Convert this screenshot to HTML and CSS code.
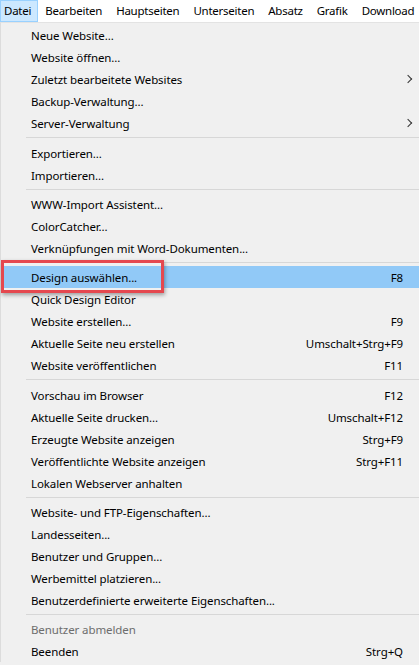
FILE: index.html
```html
<!DOCTYPE html>
<html lang="de">

<head>
    <meta charset="UTF-8">
    <meta name="viewport" content="width=device-width, initial-scale=1.0">
    <title>Datei-Menü</title>
    <link rel="stylesheet" href="styles.css">
</head>

<body>

    <nav class="menubar">
        <span class="bar-item active">Datei</span>
        <span class="bar-item">Bearbeiten</span>
        <span class="bar-item">Hauptseiten</span>
        <span class="bar-item">Unterseiten</span>
        <span class="bar-item">Absatz</span>
        <span class="bar-item">Grafik</span>
        <span class="bar-item">Download</span>
    </nav>

    <div class="menu">
        <div class="item">Neue Website...</div>
        <div class="item">Website öffnen...</div>
        <div class="item">Zuletzt bearbeitete Websites <span class="arrow"></span></div>
        <div class="item">Backup-Verwaltung...</div>
        <div class="item">Server-Verwaltung <span class="arrow"></span></div>
        <div class="sep wide"></div>
        <div class="item">Exportieren...</div>
        <div class="item">Importieren...</div>
        <div class="sep"></div>
        <div class="item">WWW-Import Assistent...</div>
        <div class="item">ColorCatcher...</div>
        <div class="item">Verknüpfungen mit Word-Dokumenten...</div>
        <div class="sep"></div>
        <div class="item hover">Design auswählen... <span class="key">F8</span></div>
        <div class="item">Quick Design Editor</div>
        <div class="item">Website erstellen... <span class="key">F9</span></div>
        <div class="item">Aktuelle Seite neu erstellen <span class="key">Umschalt+Strg+F9</span></div>
        <div class="item">Website veröffentlichen <span class="key">F11</span></div>
        <div class="sep wide"></div>
        <div class="item">Vorschau im Browser <span class="key">F12</span></div>
        <div class="item">Aktuelle Seite drucken... <span class="key">Umschalt+F12</span></div>
        <div class="item">Erzeugte Website anzeigen <span class="key">Strg+F9</span></div>
        <div class="item">Veröffentlichte Website anzeigen <span class="key">Strg+F11</span></div>
        <div class="item">Lokalen Webserver anhalten</div>
        <div class="sep"></div>
        <div class="item">Website- und FTP-Eigenschaften...</div>
        <div class="item">Landesseiten...</div>
        <div class="item">Benutzer und Gruppen...</div>
        <div class="item">Werbemittel platzieren...</div>
        <div class="item">Benutzerdefinierte erweiterte Eigenschaften...</div>
        <div class="sep"></div>
        <div class="item disabled">Benutzer abmelden</div>
        <div class="item">Beenden <span class="key">Strg+Q</span></div>
    </div>

    <!-- Markierung im Screenshot -->
    <div class="mark"></div>

</body>

</html>
```

FILE: styles.css
```css
body {
    margin: 0;
    background-color: #f0f0f0;
    font-family: "Noto Sans", "Open Sans", sans-serif;
    font-size: 11.5px;
    letter-spacing: -0.1px;
    color: #000;
    overflow: hidden;
}

.menubar {
    display: flex;
    height: 22px;
    background-color: #fff;
    white-space: nowrap;
    letter-spacing: -0.25px;
}

.bar-item {
    padding: 0 6px;
    line-height: 20px;
    border: 1px solid transparent;
}

.bar-item:first-child {
    padding-left: 3px;
}

.bar-item.active {
    background-color: #cce8ff;
    border-color: #99d1ff;
}

.menu {
    border-top: 1px solid #e3e3e3;
    border-left: 1px solid #dcdcdc;
    padding: 1px 0 0 2px;
}

.item {
    display: flex;
    align-items: center;
    height: 22px;
    padding-left: 28px;
    padding-right: 16px;
    white-space: nowrap;
}

.item.hover {
    background-color: #91c9f7;
}

.item.disabled {
    color: #6d6d6d;
}

.key {
    margin-left: auto;
}

.arrow {
    margin-left: auto;
    margin-right: -8px;
    width: 5px;
    height: 5px;
    border-top: 1px solid #333;
    border-right: 1px solid #333;
    transform: rotate(45deg);
}

.sep {
    height: 1px;
    background-color: #d7d7d7;
    margin: 3px 0 3px 23px;
}

.sep.wide {
    margin-bottom: 4px;
}

.mark {
    position: absolute;
    left: 1px;
    top: 260px;
    width: 157px;
    height: 27px;
    border: 3px solid #e5484f;
    box-shadow: 1px 2px 4px rgba(0, 0, 0, 0.35);
}
```
